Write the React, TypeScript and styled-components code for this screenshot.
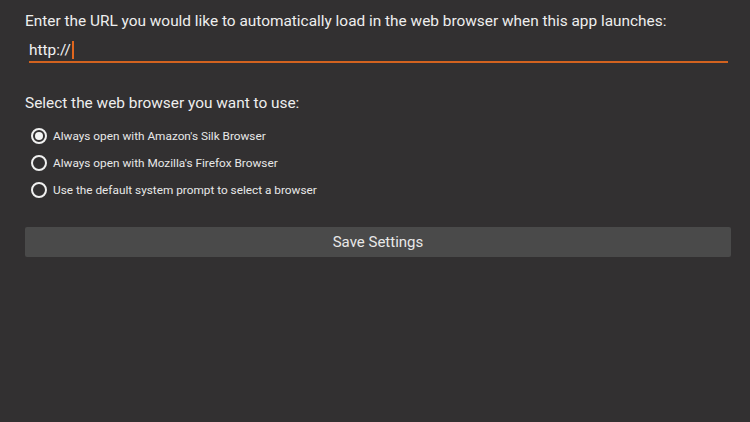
import styled, { createGlobalStyle } from 'styled-components'

const GlobalStyle = createGlobalStyle`
  html, body {
    margin: 0;
    padding: 0;
    background: #323031;
    font-family: Roboto, "Liberation Sans", sans-serif;
  }
`

const options = [
  'Always open with Amazon\'s Silk Browser',
  'Always open with Mozilla\'s Firefox Browser',
  'Use the default system prompt to select a browser',
]

const App = () => {
  return (
    <>
      <GlobalStyle />
      <Page>
        <Label>Enter the URL you would like to automatically load in the web browser when this app launches:</Label>
        <UrlField>
          <UrlText>http://</UrlText>
          <Caret />
        </UrlField>
        <Label className='section'>Select the web browser you want to use:</Label>
        <RadioList>
          {options.map((text, index) => (
            <RadioRow key={index}>
              <RadioCircle checked={index === 0} />
              <RadioText>{text}</RadioText>
            </RadioRow>
          ))}
        </RadioList>
        <SaveButton>Save Settings</SaveButton>
      </Page>
    </>
  )
}

export default App

const Page = styled.div`
  width: 750px;
  height: 422px;
  box-sizing: border-box;
  padding: 11px 19px 0 25px;
  display: flex;
  flex-direction: column;
  color: #ececec;
  .section {
    margin-top: 30px;
  }
`

const Label = styled.div`
  font-size: 15.4px;
  line-height: 20px;
  color: #eeeeee;
  white-space: nowrap;
`

const UrlField = styled.div`
  margin: 8px 3px 0 4px;
  height: 22px;
  display: flex;
  align-items: center;
  border-bottom: 2px solid #d2621f;
`

const UrlText = styled.span`
  font-size: 15.4px;
  line-height: 20px;
  color: #f2f2f2;
`

const Caret = styled.span`
  width: 2px;
  height: 18px;
  margin-left: 1px;
  background: #e0661e;
`

const RadioList = styled.div`
  margin-top: 9px;
  display: flex;
  flex-direction: column;
`

const RadioRow = styled.div`
  height: 27px;
  display: flex;
  align-items: center;
  gap: 6px;
`

const RadioCircle = styled.span<{ checked: boolean }>`
  width: 16px;
  height: 16px;
  box-sizing: border-box;
  border: 2px solid #f0f0f0;
  border-radius: 50%;
  margin-left: 6px;
  display: flex;
  align-items: center;
  justify-content: center;
  &::after {
    content: '';
    width: 8px;
    height: 8px;
    border-radius: 50%;
    background: #f4f4f4;
    display: ${(props) => (props.checked ? 'block' : 'none')};
  }
`

const RadioText = styled.span`
  font-size: 11.8px;
  color: #e8e8e8;
`

const SaveButton = styled.div`
  margin-top: 24px;
  height: 30px;
  display: flex;
  align-items: center;
  justify-content: center;
  background: #4a4a4a;
  border-radius: 2px;
  font-size: 15px;
  color: #e8e8e8;
`
